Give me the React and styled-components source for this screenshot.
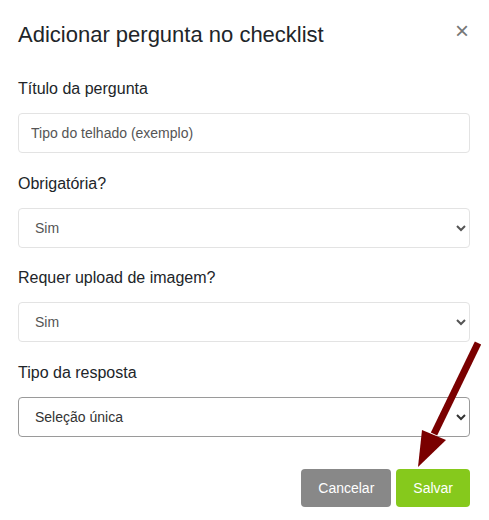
import React from 'react'
import styled, { createGlobalStyle } from 'styled-components'

const Global = createGlobalStyle`
body{
    margin: 0;
    background: #fff;
    font-family: "Liberation Sans", Arial, sans-serif;
}
`;

const Modal = styled.div`
    position: relative;
    width: 489px;
    height: 520px;
    box-sizing: border-box;
    padding: 0 19px 0 18px;
    color: #212529;
`;

const Header = styled.div`
    display: flex;
    justify-content: space-between;
    align-items: flex-start;
    padding-top: 21px;
    margin-bottom: 28px;
`;

const Title = styled.h2`
    margin: 0;
    font-size: 22px;
    font-weight: normal;
    line-height: 28px;
    color: #212529;
`;

const Close = styled.button`
    border: none;
    background: none;
    padding: 0;
    margin-top: 1px;
    margin-right: 1px;
    font-size: 24px;
    line-height: 18px;
    color: #777;
    cursor: pointer;
    font-family: "Liberation Sans", Arial, sans-serif;
`;

const Group = styled.div`
    display: flex;
    flex-direction: column;
    margin-bottom: 18.5px;
`;

const Label = styled.label`
    font-size: 16px;
    line-height: 24px;
    color: #212529;
    margin-bottom: 12px;
`;

const Input = styled.input`
    height: 40px;
    box-sizing: border-box;
    border: 1px solid #e3e3e3;
    border-radius: 4px;
    padding: 0 12px;
    font-size: 14px;
    color: #555;
    font-family: "Liberation Sans", Arial, sans-serif;
    &::placeholder{ color: #555; }
`;

const Select = styled.select`
    height: 40px;
    box-sizing: border-box;
    border: 1px solid ${p => p.dark ? '#9a9a9a' : '#e3e3e3'};
    border-radius: 4px;
    padding: 0 12px;
    font-size: 14px;
    color: ${p => p.dark ? '#333' : '#555'};
    background: #fff;
    font-family: "Liberation Sans", Arial, sans-serif;
`;

const Footer = styled.div`
    display: flex;
    justify-content: flex-end;
    gap: 5px;
    margin-top: 32px;
`;

const Button = styled.button`
    height: 38px;
    border: none;
    border-radius: 4px;
    padding: 0 17px;
    font-size: 14px;
    color: #fff;
    background: ${p => p.primary ? '#86c91c' : '#888888'};
    font-family: "Liberation Sans", Arial, sans-serif;
    cursor: pointer;
`;

const Arrow = styled.svg`
    position: absolute;
    left: 410px;
    top: 338px;
    pointer-events: none;
`;

function App() {
    return (
        <Modal>
            <Global />
            <Header>
                <Title>Adicionar pergunta no checklist</Title>
                <Close>×</Close>
            </Header>
            <Group>
                <Label>Título da pergunta</Label>
                <Input placeholder="Tipo do telhado (exemplo)" />
            </Group>
            <Group>
                <Label>Obrigatória?</Label>
                <Select defaultValue="sim">
                    <option value="sim">Sim</option>
                    <option value="nao">Não</option>
                </Select>
            </Group>
            <Group>
                <Label>Requer upload de imagem?</Label>
                <Select defaultValue="sim">
                    <option value="sim">Sim</option>
                    <option value="nao">Não</option>
                </Select>
            </Group>
            <Group>
                <Label>Tipo da resposta</Label>
                <Select dark defaultValue="unica">
                    <option value="unica">Seleção única</option>
                    <option value="multipla">Seleção múltipla</option>
                    <option value="texto">Texto</option>
                </Select>
            </Group>
            <Footer>
                <Button>Cancelar</Button>
                <Button primary>Salvar</Button>
            </Footer>
            <Arrow width="79" height="135" viewBox="0 0 79 135">
                <line x1="68" y1="5" x2="24" y2="96" stroke="#7a0000" strokeWidth="7" />
                <polygon points="12,92 36,102 8,129" fill="#7a0000" />
            </Arrow>
        </Modal>
    )
}

export default App
